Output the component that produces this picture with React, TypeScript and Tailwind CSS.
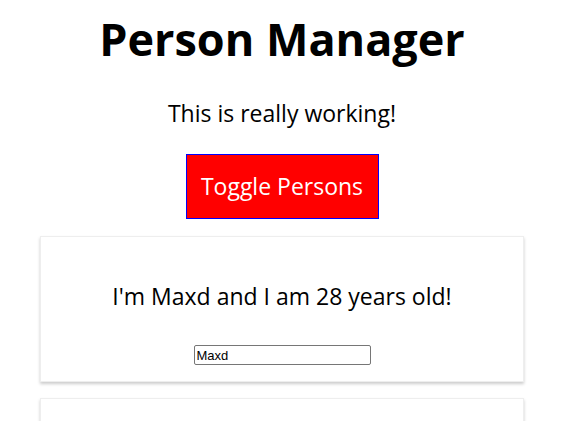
import { useState } from "react";

export default function App() {
  const [name, setName] = useState("Maxd");

  return (
    <div className="w-[564px] text-center text-black font-['Open_Sans',sans-serif]">
      <h1 className="text-[45px] font-bold leading-[56px] pt-[11px] m-0">Person Manager</h1>
      <p className="text-[23px] leading-[32px] mt-[30px]">This is really working!</p>
      <button className="mt-[25px] bg-[#ff0000] text-white text-[23px] border border-[#0000ff] w-[193px] h-[65px]">
        Toggle Persons
      </button>

      {/* person cards */}
      <div className="w-[484px] mx-auto mt-[17px] border border-[#eeeeee] shadow-[0_2px_3px_#cccccc] pt-[43px] pb-[15px]">
        <p className="text-[23px] leading-[32px]">I'm {name} and I am 28 years old!</p>
        <input
          value={name}
          onChange={(e) => setName(e.target.value)}
          className="mt-[33px] w-[177px] h-[20px] border border-[#767676] rounded-[2px] px-[2px] text-[13px] font-['Liberation_Sans',sans-serif] outline-none"
        />
      </div>
      <div className="w-[484px] mx-auto mt-[16px] border border-[#eeeeee] shadow-[0_2px_3px_#cccccc] h-[144px]" />
    </div>
  );
}
